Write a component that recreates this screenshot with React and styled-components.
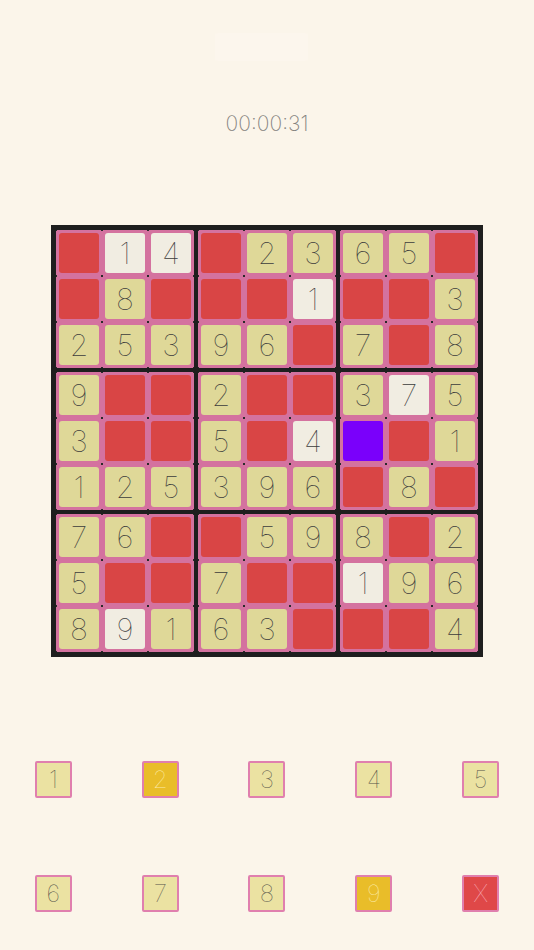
import React from 'react';
import styled, { createGlobalStyle } from 'styled-components';

const GlobalStyle = createGlobalStyle`
  html, body {
    margin: 0;
    padding: 0;
    background: #fbf5ea;
  }
  * {
    box-sizing: border-box;
  }
`;

// R = red, P = purple, "1w" = given/white cell, digit = filled cell
const Rows = [
  ['R', '1w', '4w', 'R', '2', '3', '6', '5', 'R'],
  ['R', '8', 'R', 'R', 'R', '1w', 'R', 'R', '3'],
  ['2', '5', '3', '9', '6', 'R', '7', 'R', '8'],
  ['9', 'R', 'R', '2', 'R', 'R', '3', '7w', '5'],
  ['3', 'R', 'R', '5', 'R', '4w', 'P', 'R', '1'],
  ['1', '2', '5', '3', '9', '6', 'R', '8', 'R'],
  ['7', '6', 'R', 'R', '5', '9', '8', 'R', '2'],
  ['5', 'R', 'R', '7', 'R', 'R', '1w', '9', '6'],
  ['8', '9w', '1', '6', '3', 'R', 'R', 'R', '4'],
];

const Keys = [
  { label: '1' },
  { label: '2', active: true },
  { label: '3' },
  { label: '4' },
  { label: '5' },
  { label: '6' },
  { label: '7' },
  { label: '8' },
  { label: '9', active: true },
  { label: 'X', clear: true },
];

const cellKind = (v) => {
  if (v === 'R') return 'red';
  if (v === 'P') return 'purple';
  if (v.endsWith('w')) return 'given';
  return 'filled';
};

const boxCells = (bi) => {
  const br = Math.floor(bi / 3) * 3;
  const bc = (bi % 3) * 3;
  const out = [];
  for (let r = 0; r < 3; r++) {
    for (let c = 0; c < 3; c++) {
      out.push(Rows[br + r][bc + c]);
    }
  }
  return out;
};

const App = () => {
  return (
    <Page>
      <GlobalStyle />
      <TopBar />
      <Timer>00:00:31</Timer>
      <Board>
        {Array.from({ length: 9 }).map((_, bi) => (
          <Box key={bi}>
            {boxCells(bi).map((v, ci) => (
              <CellSlot key={ci}>
                <Cell kind={cellKind(v)}>
                  {v === 'R' || v === 'P' ? '' : v.replace('w', '')}
                </Cell>
              </CellSlot>
            ))}
          </Box>
        ))}
      </Board>
      <Keypad>
        {Keys.map((k) => (
          <KeySlot key={k.label}>
            <Key active={k.active} clear={k.clear}>
              {k.label}
            </Key>
          </KeySlot>
        ))}
      </Keypad>
    </Page>
  );
};

const Page = styled.div`
  width: 534px;
  height: 950px;
  background: #fbf5ea;
  display: flex;
  flex-direction: column;
  align-items: center;
  font-family: Inter, Roboto, 'Liberation Sans', sans-serif;
  overflow: hidden;
`;

const TopBar = styled.div`
  margin-top: 33px;
  margin-right: 12px;
  width: 93px;
  height: 28px;
  border-radius: 3px;
  background: #fcf6ed;
`;

const Timer = styled.div`
  margin-top: 51px;
  height: 24px;
  line-height: 24px;
  font-size: 21px;
  font-weight: 200;
  color: #858380;
`;

const Board = styled.div`
  margin-top: 89px;
  display: grid;
  grid-template-columns: repeat(3, 138px);
  grid-template-rows: repeat(3, 138px);
  gap: 4px;
  padding: 5px;
  background: #1e1e1e;
`;

const Box = styled.div`
  display: grid;
  grid-template-columns: repeat(3, 46px);
  grid-template-rows: repeat(3, 46px);
  background-color: #d4729f;
  background-image: radial-gradient(circle, #2a2a2a 0.8px, transparent 1.4px);
  background-size: 46px 46px;
  background-position: -23px -23px;
`;

const CellSlot = styled.div`
  padding: 3px;
`;

const cellColors = {
  red: '#d94545',
  purple: '#7a00fb',
  given: '#f1ede2',
  filled: '#dfd898',
};

const Cell = styled.div`
  width: 40px;
  height: 40px;
  border-radius: 3px;
  background: ${(p) => cellColors[p.kind]};
  display: flex;
  align-items: center;
  justify-content: center;
  font-size: 30px;
  font-weight: 100;
  color: #3c3c3c;
  line-height: 1;
`;

const Keypad = styled.div`
  margin-top: 104px;
  width: 534px;
  display: grid;
  grid-template-columns: repeat(5, 1fr);
  row-gap: 77px;
`;

const KeySlot = styled.div`
  display: flex;
  justify-content: center;
`;

const Key = styled.div`
  width: 37px;
  height: 37px;
  border: 2px solid #e07fae;
  border-radius: 2px;
  background: ${(p) => (p.clear ? '#df4848' : p.active ? '#e9bd29' : '#ebe2a2')};
  color: ${(p) => (p.clear ? '#f6a9b4' : p.active ? '#fbeaa8' : '#55534a')};
  display: flex;
  align-items: center;
  justify-content: center;
  font-size: 24px;
  font-weight: 100;
  line-height: 1;
`;

export default App;
